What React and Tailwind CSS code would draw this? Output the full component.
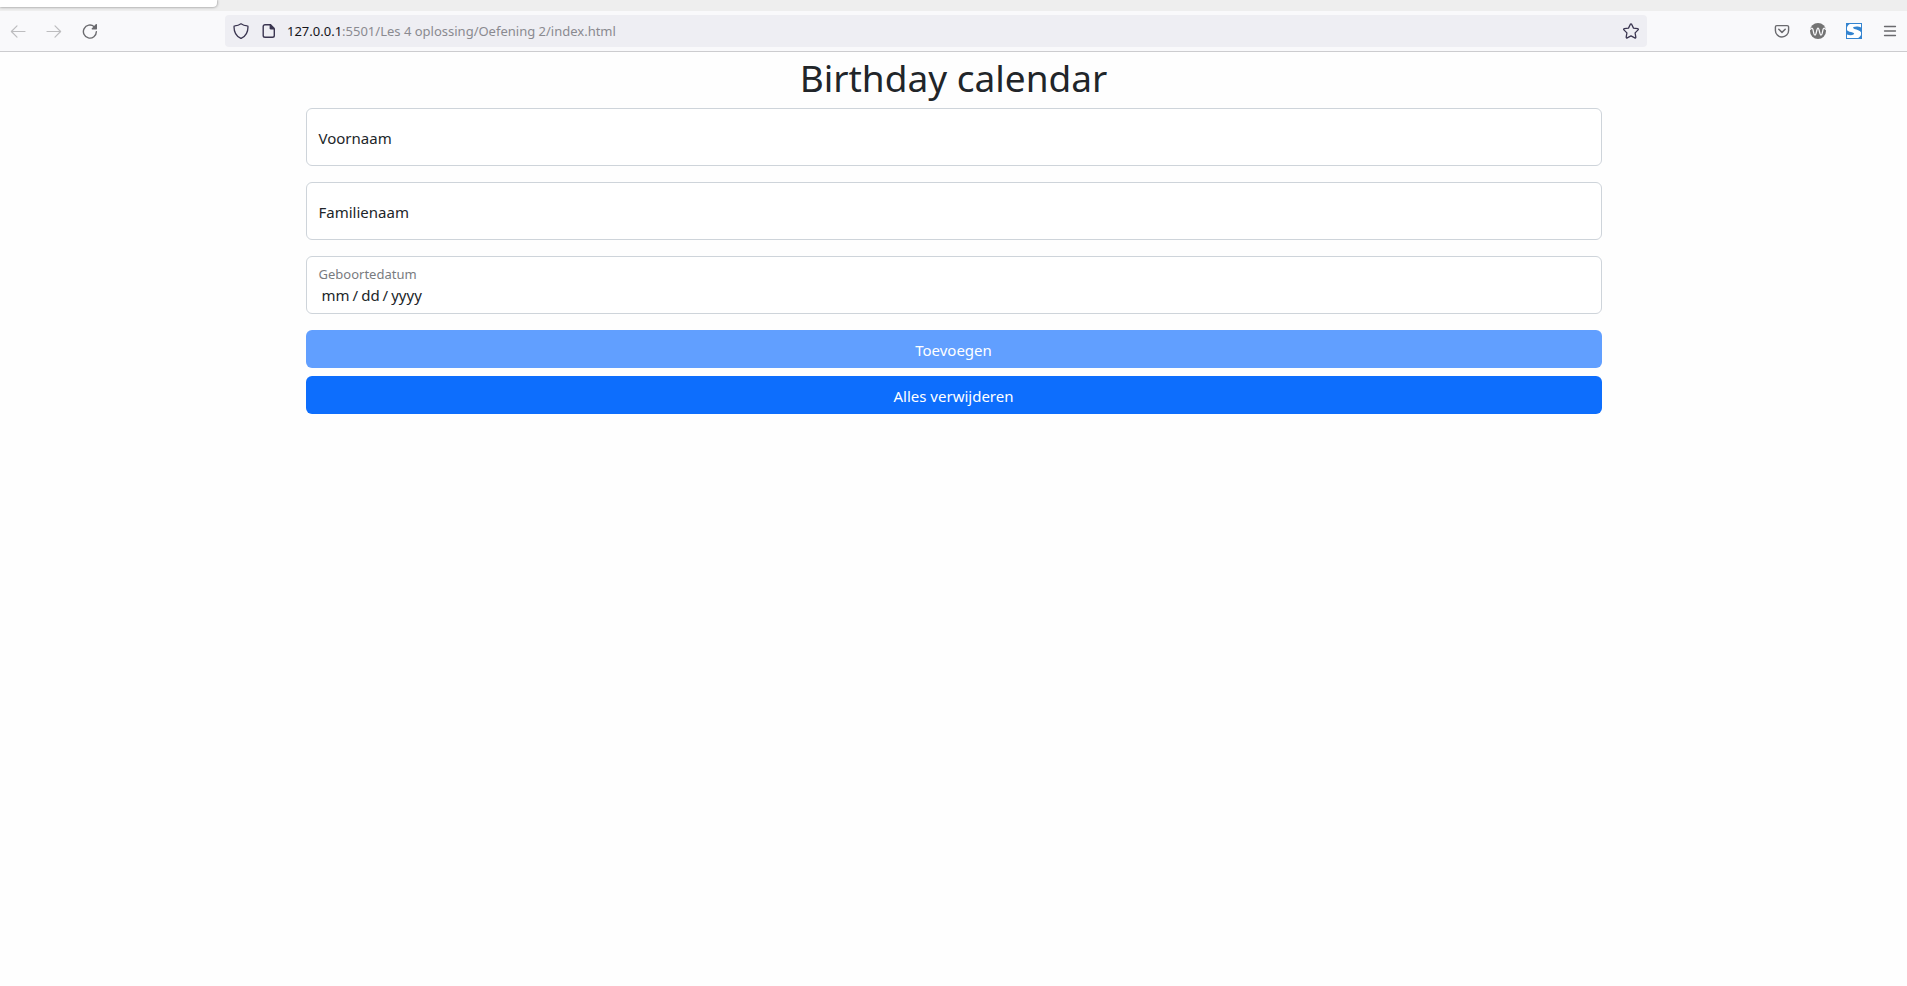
import React from "react";

function NavButton({ label, className = "w-9", children }) {
  return (
    <button type="button" aria-label={label} className={`flex h-8 shrink-0 items-center justify-center ${className}`}>
      {children}
    </button>
  );
}

function BackIcon() {
  return (
    <svg width="16" height="16" viewBox="0 0 16 16" fill="none" stroke="currentColor" strokeWidth="1.2" strokeLinecap="round" strokeLinejoin="round">
      <path d="M15 8.500H1.600M7 2.900 1.400 8.500 7 14.100" />
    </svg>
  );
}

function ForwardIcon() {
  return (
    <svg width="16" height="16" viewBox="0 0 16 16" fill="none" stroke="currentColor" strokeWidth="1.2" strokeLinecap="round" strokeLinejoin="round">
      <path d="M1 8.500h13.400M9 2.900 14.600 8.500 9 14.100" />
    </svg>
  );
}

function ReloadIcon() {
  return (
    <svg width="16" height="16" viewBox="0 0 16 16" fill="none">
      <path d="M14.400 8.600A6.500 6.500 0 1 1 12.200 3.700" stroke="currentColor" strokeWidth="1.400" strokeLinecap="round" />
      <path d="M15 1.500v4.300a.6.600 0 0 1-.6.600h-4.300c-.5 0-.7-.6-.4-.9L14 1.100c.4-.4 1-.1 1 .4z" fill="currentColor" />
    </svg>
  );
}

function ShieldIcon() {
  return (
    <svg width="16" height="16" viewBox="0 0 16 16" fill="none" stroke="currentColor" strokeWidth="1.3" strokeLinejoin="round">
      <path d="M8 .8c1.800 1.300 4 2 6.200 2.100.5 0 .8.3.8.8 0 5.300-2 9.300-6.500 11.400-.3.200-.7.200-1 0C3 13 1 9 1 3.700c0-.5.3-.8.8-.8C4 2.800 6.200 2.100 8 .8z" />
    </svg>
  );
}

function PageIcon() {
  return (
    <svg width="16" height="16" viewBox="0 0 16 16" fill="none">
      <path d="M9.500 1.700H4A1.800 1.800 0 0 0 2.200 3.500v9A1.800 1.800 0 0 0 4 14.300h7.500a1.800 1.800 0 0 0 1.800-1.800V6" stroke="currentColor" strokeWidth="1.400" />
      <path d="M8.600 1h1.200L14 5.200v1.400H10A1.400 1.400 0 0 1 8.600 5.200z" fill="currentColor" />
    </svg>
  );
}

function StarIcon() {
  return (
    <svg width="16" height="16" viewBox="0 0 16 16" fill="none" stroke="currentColor" strokeWidth="1.3" strokeLinejoin="round">
      <path d="M7.400 1.200a.7.700 0 0 1 1.200 0l1.900 3.900 4.200.6c.6.100.8.800.4 1.200l-3 3 .7 4.300c.1.600-.5 1-1 .7L8 12.900l-3.800 2c-.5.300-1.100-.1-1-.7l.7-4.300-3-3c-.4-.4-.2-1.100.4-1.200l4.200-.6z" />
    </svg>
  );
}

function PocketIcon() {
  return (
    <svg width="16" height="16" viewBox="0 0 16 16" fill="none" stroke="currentColor" strokeWidth="1.400" strokeLinecap="round" strokeLinejoin="round">
      <path d="M2.800 2.600h10.400a1.400 1.400 0 0 1 1.400 1.400v3.400a6.600 6.600 0 0 1-13.200 0V4a1.400 1.400 0 0 1 1.400-1.400z" />
      <path d="M4.800 6.300 8 9.400l3.200-3.100" strokeWidth="1.500" />
    </svg>
  );
}

function WaveIcon() {
  return (
    <svg width="16" height="16" viewBox="0 0 16 16" fill="none">
      <circle cx="8" cy="8" r="8" fill="#737373" />
      <path d="M.6 6.200C2 4.200 2.900 5.400 3.300 8c.4 2.500.9 4.100 1.700 4.100 1.500 0 1.500-6.900 3-6.900s1.500 6.900 3 6.900c.8 0 1.300-1.600 1.700-4.100.4-2.600 1.300-3.800 2.700-1.800" stroke="#f9f9fb" strokeWidth="1.300" strokeLinecap="round" />
    </svg>
  );
}

function SwooshIcon() {
  return (
    <svg width="16" height="16" viewBox="0 0 16 16" fill="none">
      <rect width="16" height="16" fill="#3484d0" />
      <rect x="1" y="1" width="14" height="14" fill="#fff" />
      <path d="M1 1h2.800C2.200 2 1.500 3 1 4.400z" fill="#3484d0" />
      <path d="M15 4.400C13 3.300 9.500 3 7.600 4c-1 .7-.4 1.500.9 1.900 2.600.8 5.200 1.300 6.500 3.300z" fill="#3484d0" />
      <path d="M1 7.200c1.200 1.300 3.600 1.700 5.600 2.300 1.800.5 2 1.500.8 2.100C5.600 12.500 2.800 12.200 1 11.400z" fill="#3484d0" />
      <path d="M15 11.800c-.5 1.400-1.400 2.400-2.800 3.200H15z" fill="#3484d0" />
    </svg>
  );
}

function MenuIcon() {
  return (
    <svg width="16" height="16" viewBox="0 0 16 16" fill="none" stroke="currentColor" strokeWidth="1.300" strokeLinecap="round">
      <path d="M2.500 3.500h11M2.500 8h11M2.500 12.500h11" />
    </svg>
  );
}

function BrowserBar() {
  return (
    <header>
      <div className="h-[11px] overflow-hidden bg-[#eeeeee]">
        <div className="h-[7px] w-[217px] rounded-br bg-white shadow-[0_0_3px_rgba(0,0,0,0.5)]" />
      </div>
      <div className="flex h-[41px] items-center border-b border-[#cccccf] bg-[#f9f9fb] text-[#6a6a6e]">
        <NavButton label="Back" className="w-9 text-[#bdbdbf]"><BackIcon /></NavButton>
        <NavButton label="Forward" className="w-9 text-[#bdbdbf]"><ForwardIcon /></NavButton>
        <NavButton label="Reload"><ReloadIcon /></NavButton>
        <div className="mx-[117px] flex h-8 min-w-0 flex-1 items-center rounded bg-[#eeeef3] px-2 text-[#3a3550]">
          <ShieldIcon />
          <span className="ml-3 flex"><PageIcon /></span>
          <a href="#" className="ml-[10px] flex-1 truncate pt-[2px] text-[13px] text-[#8a8a90]">
            <span className="text-[#15141a]">127.0.0.1</span>:5501/Les 4 oplossing/Oefening 2/index.html
          </a>
          <button type="button" aria-label="Bookmark this page"><StarIcon /></button>
        </div>
        <NavButton label="Save to Pocket"><PocketIcon /></NavButton>
        <NavButton label="Wave extension"><WaveIcon /></NavButton>
        <NavButton label="Swoosh extension"><SwooshIcon /></NavButton>
        <NavButton label="Open menu" className="w-[35px]"><MenuIcon /></NavButton>
      </div>
    </header>
  );
}

function FloatingField({ id, label }) {
  return (
    <div className="mb-4 grid h-[58px] items-center rounded-md border border-[#ced4da] bg-white">
      <input id={id} type="text" className="col-start-1 row-start-1 h-full w-full rounded-md bg-transparent px-3 outline-none" />
      <label htmlFor={id} className="pointer-events-none col-start-1 row-start-1 px-3 pt-[2px]">{label}</label>
    </div>
  );
}

function DateField({ id, label }) {
  return (
    <div className="mb-4 flex h-[58px] flex-col rounded-md border border-[#ced4da] bg-white px-3 pt-2">
      <label htmlFor={id} className="text-[13px] leading-[18px] text-[#797c7f]">{label}</label>
      <input
        id={id}
        type="date"
        className="h-6 w-full bg-transparent pl-[2px] leading-6 outline-none [&::-webkit-calendar-picker-indicator]:hidden [&::-webkit-date-and-time-value]:text-left [&::-webkit-datetime-edit]:p-0 [&::-webkit-datetime-edit-fields-wrapper]:p-0 [&::-webkit-datetime-edit-text]:px-[2px]"
      />
    </div>
  );
}

export default function App() {
  return (
    <div className="min-h-screen bg-[#fefefe] font-['Noto_Sans','Open_Sans',sans-serif] text-[15px] text-[#212529]">
      <BrowserBar />
      <main className="mx-auto max-w-[1320px] px-3">
        <h1 className="mb-[6px] pt-[2px] text-center text-[37px] leading-[48px]">Birthday calendar</h1>
        <form onSubmit={(e) => e.preventDefault()}>
          <FloatingField id="voornaam" label="Voornaam" />
          <FloatingField id="familienaam" label="Familienaam" />
          <DateField id="geboortedatum" label="Geboortedatum" />
          <div className="grid gap-2">
            <button type="submit" disabled className="h-[38px] rounded-md bg-[#619fff] pt-[2px] text-white">Toevoegen</button>
            <button type="button" className="h-[38px] rounded-md bg-[#0d6efd] pt-[2px] text-white">Alles verwijderen</button>
          </div>
        </form>
      </main>
    </div>
  );
}
